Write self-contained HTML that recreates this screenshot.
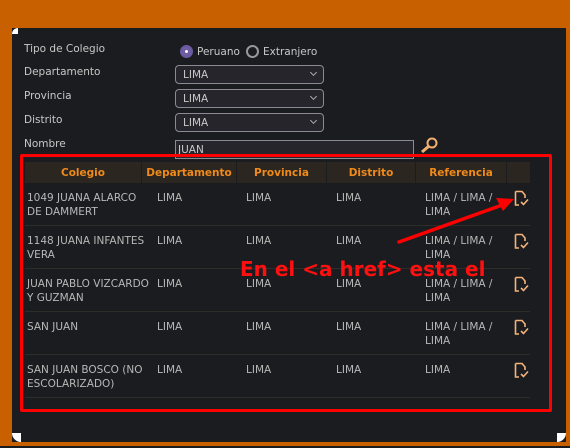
<!DOCTYPE html>
<html><head><style>
*{margin:0;padding:0;box-sizing:border-box}
body{width:570px;height:448px;background:#c86000;position:relative;overflow:hidden;font-family:"DejaVu Sans","Liberation Sans",sans-serif;font-size:10.5px;color:#c8c8c8}
.panel{position:absolute;left:12px;top:28px;width:554px;height:414px;background:#1b1c1f}
.bot{position:absolute;left:0;top:446px;width:570px;height:2px;background:#1b1c1f}
.c{position:absolute;width:9px;height:9px;background:#fff}
.lbl{position:absolute;left:24px;color:#c8c8c8}
.sel{position:absolute;left:175px;width:149px;height:19px;border:1px solid #8a8a95;border-radius:4px;background:#25252b;padding:3px 7px 1px;color:#c8c8c8}
.sel:after{content:"";position:absolute;right:7px;top:4px;width:4px;height:4px;border-right:1px solid #aaa;border-bottom:1px solid #aaa;transform:rotate(45deg)}
.hdr{position:absolute;top:162px;height:21px;background:#2b2620;color:#f08a1a;font-weight:bold;text-align:center;line-height:22px;font-size:10.5px}
.cell{position:absolute;line-height:14px;font-size:10.5px;color:#b8b8b8}
.sep{position:absolute;left:25px;width:505px;height:1px;background:#2d2d2a}
.ic{position:absolute;left:514px}
</style></head><body>
<div class="panel"></div><div class="bot"></div>
<div class="c" style="left:12px;top:28px;width:6px;height:6px;border-radius:6px 0 0 0"></div>
<div class="c" style="left:12px;top:433px;border-bottom-left-radius:9px"></div>
<div class="c" style="left:557px;top:433px;border-bottom-right-radius:9px"></div>
<div class="lbl" style="top:43px">Tipo de Colegio</div>
<div class="lbl" style="top:66px">Departamento</div>
<div class="lbl" style="top:90px">Provincia</div>
<div class="lbl" style="top:114px">Distrito</div>
<div class="lbl" style="top:138px">Nombre</div>
<div style="position:absolute;left:180px;top:45px;width:13px;height:13px;border-radius:50%;background:#b8a6e0;border:3px solid #6b5aa0"></div>
<div style="position:absolute;left:183px;top:48px;width:7px;height:7px;border-radius:50%;background:#fff;border:2px solid #6b5aa0"></div>
<div style="position:absolute;left:197px;top:46px">Peruano</div>
<div style="position:absolute;left:246px;top:45px;width:13px;height:13px;border-radius:50%;border:2px solid #999"></div>
<div style="position:absolute;left:263px;top:46px">Extranjero</div>
<div class="sel" style="top:65px">LIMA</div>
<div class="sel" style="top:89px">LIMA</div>
<div class="sel" style="top:113px">LIMA</div>
<div style="position:absolute;left:175px;top:140px;width:239px;height:19px;border:1px solid #8a8a95;background:#25252b;padding:3px 2px 1px;color:#c8c8c8">JUAN</div>
<svg style="position:absolute;left:419px;top:136px" width="20" height="18"><circle cx="13" cy="7" r="4.5" fill="none" stroke="#f0b070" stroke-width="2"/><line x1="10" y1="10" x2="3" y2="16" stroke="#f0b070" stroke-width="3"/></svg>
<div class="hdr" style="left:25px;width:116px">Colegio</div>
<div class="hdr" style="left:142px;width:94px">Departamento</div>
<div class="hdr" style="left:237px;width:89px">Provincia</div>
<div class="hdr" style="left:327px;width:88px">Distrito</div>
<div class="hdr" style="left:416px;width:90px">Referencia</div>
<div class="hdr" style="left:507px;width:23px"></div>

<div class="cell" style="left:27px;top:191px">1049 JUANA ALARCO<br>DE DAMMERT</div>
<div class="cell" style="left:27px;top:234px">1148 JUANA INFANTES<br>VERA</div>
<div class="cell" style="left:27px;top:277px">JUAN PABLO VIZCARDO<br>Y GUZMAN</div>
<div class="cell" style="left:27px;top:320px">SAN JUAN</div>
<div class="cell" style="left:27px;top:363px">SAN JUAN BOSCO (NO<br>ESCOLARIZADO)</div>
<div class="cell" style="left:157px;top:191px">LIMA</div><div class="cell" style="left:246px;top:191px">LIMA</div><div class="cell" style="left:336px;top:191px">LIMA</div><div class="cell" style="left:425px;top:191px">LIMA / LIMA /<br>LIMA</div>
<div class="cell" style="left:157px;top:234px">LIMA</div><div class="cell" style="left:246px;top:234px">LIMA</div><div class="cell" style="left:336px;top:234px">LIMA</div><div class="cell" style="left:425px;top:234px">LIMA / LIMA /<br>LIMA</div>
<div class="cell" style="left:157px;top:277px">LIMA</div><div class="cell" style="left:246px;top:277px">LIMA</div><div class="cell" style="left:336px;top:277px">LIMA</div><div class="cell" style="left:425px;top:277px">LIMA / LIMA /<br>LIMA</div>
<div class="cell" style="left:157px;top:320px">LIMA</div><div class="cell" style="left:246px;top:320px">LIMA</div><div class="cell" style="left:336px;top:320px">LIMA</div><div class="cell" style="left:425px;top:320px">LIMA / LIMA /<br>LIMA</div>
<div class="cell" style="left:157px;top:363px">LIMA</div><div class="cell" style="left:246px;top:363px">LIMA</div><div class="cell" style="left:336px;top:363px">LIMA</div><div class="cell" style="left:425px;top:363px">LIMA</div>
<div class="sep" style="top:225px"></div><div class="sep" style="top:268px"></div><div class="sep" style="top:311px"></div><div class="sep" style="top:354px"></div><div class="sep" style="top:397px"></div>

<svg width="0" height="0" style="position:absolute"><defs><g id="d"><path d="M1.5 1.5H8L11 5V8M1.5 1.5V15H5" fill="none" stroke="#f5b37a" stroke-width="1.6"/><path d="M7 12L9.5 14.5L14 9.5" fill="none" stroke="#f5b37a" stroke-width="1.6"/></g></defs></svg>
<svg class="ic" style="top:190px" width="16" height="17"><use href="#d"/></svg>
<svg class="ic" style="top:233px" width="16" height="17"><use href="#d"/></svg>
<svg class="ic" style="top:276px" width="16" height="17"><use href="#d"/></svg>
<svg class="ic" style="top:319px" width="16" height="17"><use href="#d"/></svg>
<svg class="ic" style="top:362px" width="16" height="17"><use href="#d"/></svg>

<div style="position:absolute;left:20px;top:154px;width:532px;height:258px;border:3px solid #ff0000;border-radius:2px"></div>
<svg style="position:absolute;left:0;top:0" width="570" height="448"><line x1="399" y1="242" x2="505" y2="204" stroke="#ff0000" stroke-width="3.5" stroke-linecap="round"/><path d="M514 199L496 198L503 211Z" fill="#ff0000"/></svg>
<div style="position:absolute;left:240px;top:257px;color:#ff1010;font-weight:bold;font-size:20px;font-family:'DejaVu Sans',sans-serif;white-space:nowrap">En el &lt;a href&gt; esta el</div>
</body></html>
